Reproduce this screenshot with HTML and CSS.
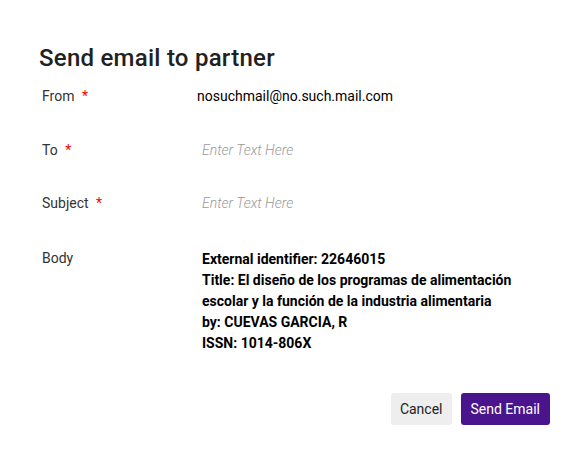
FILE: index.html
```html
<!DOCTYPE html>
<html>
<head>
<meta charset="utf-8">
<link rel="stylesheet" href="styles.css">
</head>
<body>
<div class="dialog">
  <h1 class="title">Send email to partner</h1>
  <div class="form">
    <div class="row">
      <div class="label">From <span class="req">*</span></div>
      <div class="value">nosuchmail@no.such.mail.com</div>
    </div>
    <div class="row">
      <div class="label">To <span class="req">*</span></div>
      <div class="value"><input class="input" type="text" placeholder="Enter Text Here"></div>
    </div>
    <div class="row">
      <div class="label">Subject <span class="req">*</span></div>
      <div class="value"><input class="input" type="text" placeholder="Enter Text Here"></div>
    </div>
    <div class="row body-row">
      <div class="label">Body</div>
      <div class="value body-text">
        <div>External identifier: 22646015</div>
        <div>Title: El diseño de los programas de alimentación escolar y la función de la industria alimentaria</div>
        <div>by: CUEVAS GARCIA, R</div>
        <div>ISSN: 1014-806X</div>
      </div>
    </div>
  </div>
  <div class="actions">
    <button class="btn btn-cancel">Cancel</button>
    <button class="btn btn-primary">Send Email</button>
  </div>
</div>
</body>
</html>
```
FILE: styles.css
```css
html, body {
  margin: 0;
  padding: 0;
  background: #fff;
  font-family: Roboto, "Noto Sans", sans-serif;
}
.dialog {
  width: 588px;
  height: 465px;
  box-sizing: border-box;
  padding: 42px 38px 0 39px;
}
.title {
  margin: 0;
  font-size: 24px;
  line-height: 32px;
  font-weight: 500;
  letter-spacing: 0.25px;
  color: #212121;
}
.form {
  margin-top: 7px;
  display: flex;
  flex-direction: column;
}
.row {
  display: grid;
  grid-template-columns: 158px 1fr;
  align-items: center;
  height: 30px;
  margin-bottom: 23.5px;
}
.label {
  padding-left: 3px;
  font-size: 14px;
  color: #333;
}
.req {
  color: #f00;
  margin-left: 4px;
}
.value {
  font-size: 14px;
  color: #000;
}
.input {
  border: none;
  outline: none;
  padding: 0 5px;
  margin: 0;
  width: 300px;
  font-family: Roboto, sans-serif;
  font-size: 14px;
  background: transparent;
}
.input::placeholder {
  color: #999;
  font-style: italic;
  font-weight: 300;
}
.body-row {
  height: auto;
  align-items: start;
  margin-top: 8px;
}
.body-text {
  padding-left: 5px;
  font-weight: 700;
  line-height: 21px;
  width: 320px;
  margin-top: -1px;
}
.actions {
  display: flex;
  justify-content: flex-end;
  gap: 9px;
  margin-top: 16px;
}
.btn {
  height: 32px;
  border: none;
  border-radius: 3px;
  font-family: Roboto, sans-serif;
  font-size: 14px;
  padding: 0 10px;
  cursor: pointer;
}
.btn-cancel {
  background: #eeeeee;
  color: #222;
  padding: 0 9px;
}
.btn-primary {
  background: #4a148c;
  color: #fff;
}
```
